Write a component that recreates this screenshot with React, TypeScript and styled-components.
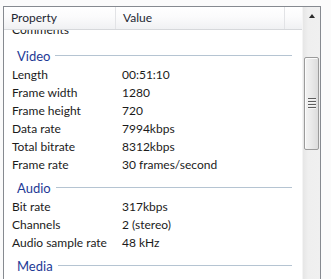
import React from "react";
import styled, { createGlobalStyle } from "styled-components";

const GlobalStyle = createGlobalStyle`
  html, body {
    margin: 0;
    padding: 0;
    background: #fbfbfb;
    overflow: hidden;
  }
  body {
    font-family: "Lato", "Liberation Sans", sans-serif;
    font-size: 12px;
    color: #1b1b1b;
  }
`;

type Row = { label: string; value: string };
type Group = { title: string; rows: Row[] };

const groups: Group[] = [
  {
    title: "Video",
    rows: [
      { label: "Length", value: "00:51:10" },
      { label: "Frame width", value: "1280" },
      { label: "Frame height", value: "720" },
      { label: "Data rate", value: "7994kbps" },
      { label: "Total bitrate", value: "8312kbps" },
      { label: "Frame rate", value: "30 frames/second" },
    ],
  },
  {
    title: "Audio",
    rows: [
      { label: "Bit rate", value: "317kbps" },
      { label: "Channels", value: "2 (stereo)" },
      { label: "Audio sample rate", value: "48 kHz" },
    ],
  },
  { title: "Media", rows: [] },
];

function App() {
  return (
    <>
      <GlobalStyle />
      <Frame>
        <ListPane>
          <Header>
            <HeaderCell $width={112}>Property</HeaderCell>
            <HeaderCell $width={169}>Value</HeaderCell>
            <HeaderCell $width={0} $last />
          </Header>
          <Viewport>
            <Content>
              <PropRow>
                <Label>Comments</Label>
                <Value></Value>
              </PropRow>
              {groups.map((g, i) => (
                <React.Fragment key={g.title}>
                  <GroupRow $first={i === 0}>
                    <GroupTitle>{g.title}</GroupTitle>
                    <GroupLine />
                  </GroupRow>
                  {g.rows.map((r) => (
                    <PropRow key={r.label}>
                      <Label>{r.label}</Label>
                      <Value>{r.value}</Value>
                    </PropRow>
                  ))}
                </React.Fragment>
              ))}
            </Content>
          </Viewport>
        </ListPane>
        <ScrollBar>
          <ArrowButton>
            <ArrowUp />
          </ArrowButton>
          <Thumb>
            <Grip>
              <span />
              <span />
              <span />
              <span />
            </Grip>
          </Thumb>
        </ScrollBar>
      </Frame>
    </>
  );
}

const Frame = styled.div`
  margin: 6px 0 0 3px;
  width: 316px;
  height: 290px;
  border: 1px solid #868a90;
  border-bottom: none;
  background: #ffffff;
  display: flex;
`;

const ListPane = styled.div`
  width: 298px;
  display: flex;
  flex-direction: column;
  overflow: hidden;
`;

const Header = styled.div`
  height: 22px;
  display: flex;
  background: linear-gradient(#ffffff 0%, #fbfbfc 45%, #f0f1f3 100%);
  border-bottom: 1px solid #d6d8db;
  flex-shrink: 0;
`;

const HeaderCell = styled.div<{ $width: number; $last?: boolean }>`
  width: ${(p) => (p.$last ? "auto" : `${p.$width}px`)};
  flex: ${(p) => (p.$last ? 1 : "none")};
  padding-left: 7px;
  box-sizing: border-box;
  border-right: ${(p) => (p.$last ? "none" : "1px solid #e2e3e6")};
  line-height: 22px;
  color: #1e2733;
  white-space: nowrap;
`;

const Viewport = styled.div`
  flex: 1;
  overflow: hidden;
`;

const Content = styled.div`
  margin-top: -9px;
`;

const PropRow = styled.div`
  height: 18px;
  display: grid;
  grid-template-columns: 118px 1fr;
  align-items: center;
  line-height: 18px;
`;

const Label = styled.div`
  padding-left: 8px;
  white-space: nowrap;
`;

const Value = styled.div`
  white-space: nowrap;
`;

const GroupRow = styled.div<{ $first?: boolean }>`
  height: ${(p) => (p.$first ? 27 : 24)}px;
  display: flex;
  align-items: center;
  padding: ${(p) => (p.$first ? 6 : 3)}px 10px 0 13px;
  box-sizing: border-box;
  gap: 5px;
`;

const GroupTitle = styled.span`
  color: #1e3a96;
  font-size: 13px;
`;

const GroupLine = styled.div`
  flex: 1;
  height: 1px;
  background: #b5c4d2;
`;

const ScrollBar = styled.div`
  width: 17px;
  background: linear-gradient(90deg, #e6e6e6 0%, #efefef 30%, #f0f0f0 100%);
  border-left: 1px solid #f4f4f4;
  display: flex;
  flex-direction: column;
  align-items: center;
`;

const ArrowButton = styled.div`
  height: 17px;
  width: 100%;
  display: flex;
  align-items: center;
  justify-content: center;
`;

const ArrowUp = styled.div`
  width: 0;
  height: 0;
  border-left: 3.5px solid transparent;
  border-right: 3.5px solid transparent;
  border-bottom: 4px solid #2c2c2c;
`;

const Thumb = styled.div`
  margin-top: 33px;
  width: 15px;
  height: 93px;
  box-sizing: border-box;
  border: 1px solid #9b9b9b;
  border-radius: 2px;
  background: linear-gradient(90deg, #f3f3f3 0%, #e9e9e9 50%, #dcdcdc 100%);
  box-shadow: inset 1px 1px 0 #fbfbfb;
  display: flex;
  align-items: center;
  justify-content: center;
`;

const Grip = styled.div`
  display: flex;
  flex-direction: column;
  gap: 1px;
  span {
    display: block;
    width: 8px;
    height: 2px;
    background: linear-gradient(#5e5e5e 50%, #f4f4f4 50%);
  }
`;

export default App;
